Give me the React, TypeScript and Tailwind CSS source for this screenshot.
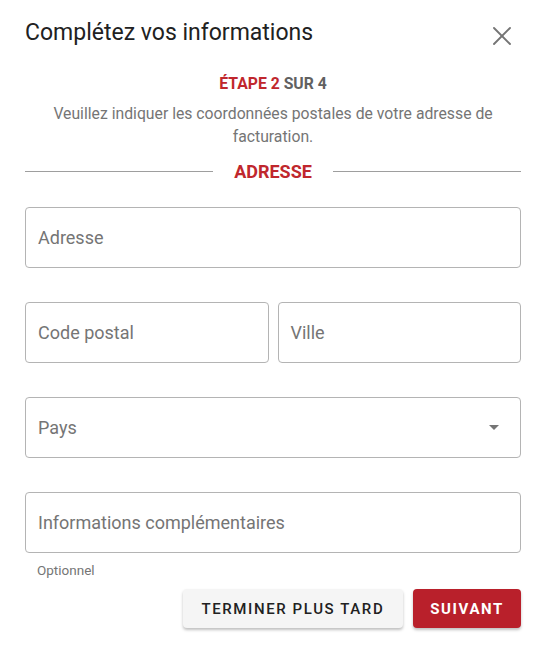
import { X } from "lucide-react";

function Field({ label, className = "", select = false }: { label: string; className?: string; select?: boolean }) {
  return (
    <div className={`flex h-[61px] items-center justify-between rounded border border-[#b4b4b4] px-3 ${className}`}>
      <span className="text-[18px] text-[#757575]">{label}</span>
      {select && (
        <svg width="10" height="5" viewBox="0 0 10 5" className="mr-[9px]">
          <path d="M0 0h10L5 5z" fill="#757575" />
        </svg>
      )}
    </div>
  );
}

export default function App() {
  return (
    <div className="h-[655px] w-[546px] bg-white px-[25px] font-['Roboto',sans-serif]">
      {/* Header */}
      <div className="mt-[17px] flex h-8 items-start justify-between">
        <h2 className="text-[23px] leading-8 font-normal text-[#212121]">Complétez vos informations</h2>
        <button className="mt-[3px] mr-[3px] text-[#757575]">
          <X size={32} strokeWidth={1.4} />
        </button>
      </div>

      {/* Step */}
      <div className="mt-[25px] text-center text-[15.75px] font-bold leading-5">
        <span className="text-[#c0272d]">ÉTAPE 2</span> <span className="text-[#616161]">SUR 4</span>
      </div>
      <p className="mx-auto mt-[8px] w-[460px] text-center text-[15.75px] leading-[23px] text-[#757575]">
        Veuillez indiquer les coordonnées postales de votre adresse de facturation.
      </p>

      {/* Section divider */}
      <div className="mt-[10px] flex items-center gap-[21px]">
        <div className="h-px flex-1 bg-[#9e9e9e]" />
        <span className="text-[18px] font-bold text-[#c0272d]">ADRESSE</span>
        <div className="h-px flex-1 bg-[#9e9e9e]" />
      </div>

      {/* Form */}
      <div className="mt-[22px] flex flex-col gap-[34px]">
        <Field label="Adresse" />
        <div className="flex gap-[9px]">
          <Field label="Code postal" className="flex-1" />
          <Field label="Ville" className="flex-1" />
        </div>
        <Field label="Pays" select />
        <div>
          <Field label="Informations complémentaires" />
          <div className="mt-[7px] pl-3 text-[13.5px] text-[#757575]">Optionnel</div>
        </div>
      </div>

      {/* Actions */}
      <div className="mt-[9px] flex justify-end gap-[10px]">
        <button className="h-[39px] rounded bg-[#f5f5f5] px-[19px] text-[15px] font-medium tracking-[1.6px] text-[#212121] shadow-[0_2px_3px_rgba(0,0,0,0.25)]">
          TERMINER PLUS TARD
        </button>
        <button className="h-[39px] rounded bg-[#b9202b] px-[17px] text-[15px] font-bold tracking-[1.6px] text-white shadow-[0_2px_3px_rgba(0,0,0,0.25)]">
          SUIVANT
        </button>
      </div>
    </div>
  );
}
